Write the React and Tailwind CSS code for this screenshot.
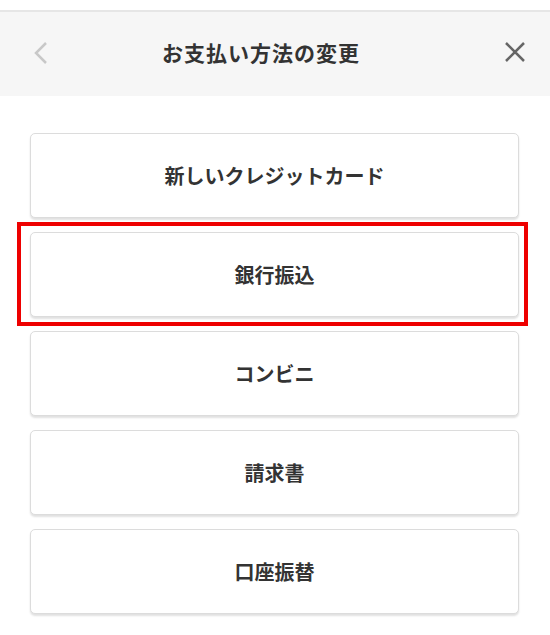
const methods = ['新しいクレジットカード', '銀行振込', 'コンビニ', '請求書', '口座振替'];

function App() {
  const selected = 1;
  return (
    <div className="w-[550px] h-[635px] bg-white overflow-hidden font-['Noto_Sans_CJK_JP','Noto_Sans',sans-serif] text-[#333]">
      <div className="h-[10px] bg-white" />
      <header className="h-[86px] bg-[#f6f6f6] border-t-2 border-[#e6e6e6] flex items-center justify-between px-[33px]">
        <svg width="16" height="24" viewBox="0 0 16 24" className="text-[#c8c8c8] -mt-[3px]">
          <path d="M13 2 L3 12 L13 22" fill="none" stroke="currentColor" strokeWidth="2.5" />
        </svg>
        <h1 className="text-[21px] font-bold tracking-[1px] -mt-[3px] mr-[30px]">お支払い方法の変更</h1>
        <svg width="24" height="24" viewBox="0 0 24 24" className="text-[#666] -mt-[5px] -mr-[10px]">
          <path d="M3 3 L21 21 M21 3 L3 21" fill="none" stroke="currentColor" strokeWidth="2.5" />
        </svg>
      </header>
      <main className="px-[30px] pt-[37px] flex flex-col gap-[14px]">
        {methods.map((m, i) => (
          <div key={m} className="relative">
            <button className="w-[489px] h-[85px] bg-white border border-[#dcdcdc] rounded-[5px] shadow-[0_2px_2px_rgba(0,0,0,0.12)] flex items-center justify-center text-[20px] font-bold text-[#333]">
              {m}
            </button>
            {i === selected && (
              <div className="absolute left-[-13px] right-[-8px] top-[-10px] bottom-[-9px] border-4 border-[#ee0000] pointer-events-none" />
            )}
          </div>
        ))}
      </main>
    </div>
  );
}

export default App;
